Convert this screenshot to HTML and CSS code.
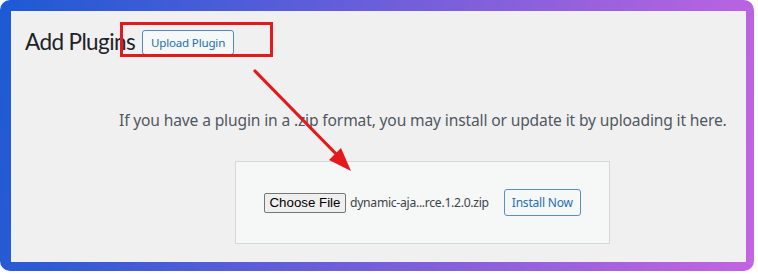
FILE: index.html
```html
<!DOCTYPE html>
<html>
<head>
<meta charset="utf-8">
<link rel="stylesheet" href="styles.css">
</head>
<body>
<div class="frame">
  <div class="panel">
    <div class="head">
      <h1 class="title">Add Plugins</h1>
      <button class="wp-btn upload">Upload Plugin</button>
    </div>
    <p class="desc">If you have a plugin in a .zip format, you may install or update it by uploading it here.</p>
    <div class="upload-box">
      <span class="file-btn">Choose File</span>
      <span class="file-name">dynamic-aja...rce.1.2.0.zip</span>
      <button class="wp-btn install">Install Now</button>
    </div>
    <div class="highlight"></div>
    <svg class="arrow" width="758" height="274" viewBox="0 0 758 274">
      <line x1="244" y1="60" x2="332" y2="150" stroke="#e3191c" stroke-width="3.2" stroke-linecap="round"/>
      <polygon points="340,160 318,149 330,137" fill="#e3191c"/>
    </svg>
  </div>
</div>
</body>
</html>
```

FILE: styles.css
```css
html, body {
  margin: 0;
  padding: 0;
  background: #ffffff;
}
.frame {
  width: 754px;
  height: 271px;
  box-sizing: border-box;
  padding: 11px 8px 9px 11px;
  border-radius: 10px;
  background: linear-gradient(100deg, #1c5ad3 0%, #4f5cd8 30%, #8a60dc 65%, #c464e2 100%);
}
.panel {
  position: relative;
  height: 100%;
  background: #f0f0f1;
  font-family: "Noto Sans", "Open Sans", sans-serif;
}
.head {
  display: flex;
  align-items: center;
  gap: 7px;
  padding: 16px 0 0 14px;
}
.title {
  margin: 0;
  font-family: Lato, "Noto Sans", sans-serif;
  font-size: 22.5px;
  font-weight: 400;
  color: #1d2327;
  line-height: 30px;
  letter-spacing: -0.6px;
}
.wp-btn {
  font-family: "Noto Sans", "Open Sans", sans-serif;
  font-size: 11.6px;
  letter-spacing: -0.2px;
  color: #2271b1;
  background: #f6f7f7;
  border: 1px solid #2271b1;
  border-radius: 3px;
  padding: 0;
  height: 25px;
  line-height: 23px;
}
.upload {
  width: 92px;
  border-color: #4f8cc6;
}
.desc {
  margin: 0;
  padding: 53px 0 0 108px;
  font-size: 15.6px;
  line-height: 20px;
  color: #50575e;
  letter-spacing: -0.15px;
}
.upload-box {
  margin: 31px 0 0 224px;
  width: 375px;
  height: 83px;
  box-sizing: border-box;
  border: 1px solid #d6d7d9;
  background: #f6f7f7;
  display: flex;
  align-items: center;
  padding-left: 28px;
}
.file-btn {
  font-family: "Liberation Sans", Arial, sans-serif;
  font-size: 13.3px;
  color: #000;
  background: #efefef;
  border: 1px solid #767676;
  border-radius: 2px;
  height: 20px;
  box-sizing: border-box;
  width: 82px;
  line-height: 18px;
  text-align: center;
}
.file-name {
  margin-left: 4px;
  font-size: 12.2px;
  color: #3c434a;
  letter-spacing: -0.3px;
}
.install {
  margin-left: 15px;
  width: 77px;
  height: 27px;
  border-color: #5b8fc4;
  font-size: 12px;
}
.highlight {
  position: absolute;
  left: 109px;
  top: 11px;
  width: 153px;
  height: 35px;
  box-sizing: border-box;
  border: 3px solid #e3191c;
}
.arrow {
  position: absolute;
  left: 0;
  top: 0;
  pointer-events: none;
}
```
